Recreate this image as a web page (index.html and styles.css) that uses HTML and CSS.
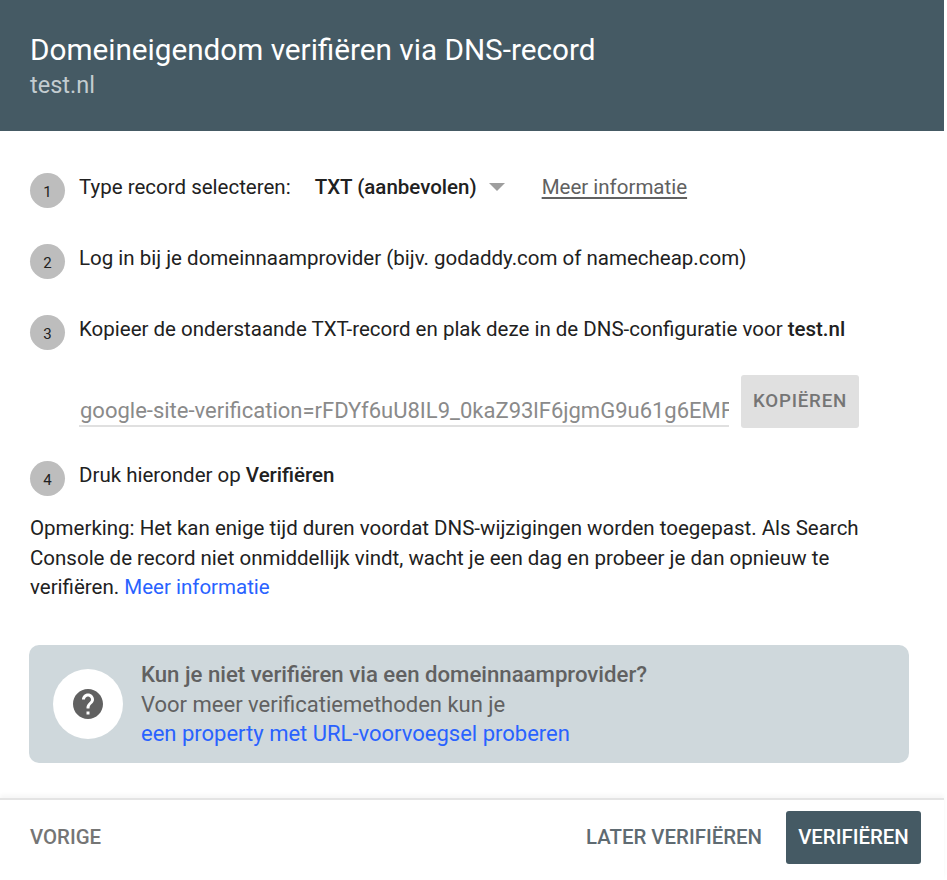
FILE: index.html
```html
<!DOCTYPE html>
<html lang="nl">
<head>
    <meta charset="UTF-8">
    <meta name="viewport" content="width=device-width, initial-scale=1.0">
    <title>Domeineigendom verifiëren via DNS-record</title>
    <link rel="stylesheet" href="styles.css">
</head>
<body>
    <div class="dialog">
        <header class="header">
            <h1>Domeineigendom verifiëren via DNS-record</h1>
            <p>test.nl</p>
        </header>

        <main class="content">
            <div class="step step-first">
                <span class="step-num">1</span>
                <span>Type record selecteren:</span>
                <span class="record-select">TXT (aanbevolen)<span class="arrow"></span></span>
                <a href="#" class="more-grey">Meer informatie</a>
            </div>
            <div class="step step-second">
                <span class="step-num">2</span>
                <span>Log in bij je domeinnaamprovider (bijv. godaddy.com of namecheap.com)</span>
            </div>
            <div class="step step-third">
                <span class="step-num">3</span>
                <span>Kopieer de onderstaande TXT-record en plak deze in de DNS-configuratie voor <b>test.nl</b></span>
            </div>
            <div class="copy-row">
                <div class="record-field">google-site-verification=rFDYf6uU8IL9_0kaZ93lF6jgmG9u61g6EMF</div>
                <button class="copy-button">KOPIËREN</button>
            </div>
            <div class="step step-fourth">
                <span class="step-num">4</span>
                <span>Druk hieronder op <b>Verifiëren</b></span>
            </div>
            <p class="note">Opmerking: Het kan enige tijd duren voordat DNS-wijzigingen worden toegepast. Als Search Console de record niet onmiddellijk vindt, wacht je een dag en probeer je dan opnieuw te verifiëren. <a href="#">Meer informatie</a></p>

            <div class="help-box">
                <div class="help-icon">
                    <svg width="36" height="36" viewBox="0 0 24 24"><path fill="#616161" d="M12 2C6.48 2 2 6.48 2 12s4.48 10 10 10 10-4.48 10-10S17.52 2 12 2zm1 17h-2v-2h2v2zm2.07-7.75l-.9.92C13.45 12.9 13 13.5 13 15h-2v-.5c0-1.1.45-2.1 1.17-2.83l1.24-1.26c.37-.36.59-.86.59-1.41 0-1.1-.9-2-2-2s-2 .9-2 2H8c0-2.21 1.79-4 4-4s4 1.79 4 4c0 .88-.36 1.68-.93 2.25z"/></svg>
                </div>
                <div class="help-text">
                    <b>Kun je niet verifiëren via een domeinnaamprovider?</b><br>
                    Voor meer verificatiemethoden kun je<br>
                    <a href="#">een property met URL-voorvoegsel proberen</a>
                </div>
            </div>
        </main>

        <footer class="footer">
            <button class="text-button back">VORIGE</button>
            <button class="text-button later">LATER VERIFIËREN</button>
            <button class="verify-button">VERIFIËREN</button>
        </footer>
    </div>
</body>
</html>
```
FILE: styles.css
```css
* {
    box-sizing: border-box;
}
body {
    margin: 0;
    background-color: white;
    font-family: Roboto, Arial, sans-serif;
    font-size: 20.5px;
    color: #212121;
}
a {
    text-decoration: none;
    color: #2962ff;
}
b {
    font-weight: 500;
}
button {
    font-family: inherit;
    border: none;
    cursor: pointer;
}
.dialog {
    width: 944px;
    height: 880px;
    display: flex;
    flex-direction: column;
}
.header {
    height: 131px;
    padding: 32px 30px 0;
    background-color: #455a64;
    color: white;
}
.header h1 {
    margin: 0;
    font-size: 29.7px;
    font-weight: 400;
    line-height: 36px;
}
.header p {
    margin: 0;
    font-size: 23.5px;
    line-height: 34px;
    color: #c3ccd0;
}
.content {
    flex: 1;
    padding: 42px 35px 0 29px;
}
.step {
    display: flex;
    align-items: center;
    height: 35px;
}
.step-second {
    margin-top: 36px;
}
.step-third {
    margin-top: 36px;
}
.step-fourth {
    margin-top: 33px;
}
.step-num {
    flex: none;
    width: 35px;
    height: 35px;
    margin: 0 14px 0 1px;
    padding-top: 3px;
    border-radius: 50%;
    background-color: #bdbdbd;
    font-size: 15px;
    line-height: 32px;
    text-align: center;
}
.step > span:not(.step-num) {
    position: relative;
    top: -4px;
}
.record-select {
    display: inline-flex;
    align-items: center;
    margin-left: 24px;
    font-weight: 500;
}
.arrow {
    width: 0;
    height: 0;
    margin-left: 12px;
    border-left: 8.5px solid transparent;
    border-right: 8.5px solid transparent;
    border-top: 8px solid #9e9e9e;
}
.more-grey {
    position: relative;
    top: -4px;
    margin-left: 37px;
    color: #616161;
    text-decoration: underline;
    text-underline-offset: 3px;
}
.copy-row {
    display: flex;
    align-items: flex-end;
    gap: 12px;
    margin: 25px 0 0 50px;
}
.record-field {
    width: 650px;
    height: 36px;
    margin-bottom: 1px;
    padding: 6px 0 0 1px;
    overflow: hidden;
    white-space: nowrap;
    border-bottom: 2px solid #e0e0e0;
    font-size: 22px;
    line-height: 28px;
    color: #8a8a8a;
}
.copy-button {
    width: 118px;
    height: 53px;
    padding-bottom: 3px;
    border-radius: 3px;
    background-color: #e0e0e0;
    font-size: 18.7px;
    font-weight: 500;
    letter-spacing: 0.8px;
    color: #757575;
}
.note {
    margin: 18px 0 0 1px;
    line-height: 29.5px;
}
.help-box {
    display: flex;
    align-items: center;
    gap: 18px;
    width: 880px;
    height: 118px;
    margin-top: 42px;
    padding-left: 24px;
    border-radius: 10px;
    background-color: #cfd8dc;
}
.help-icon {
    flex: none;
    display: flex;
    align-items: center;
    justify-content: center;
    width: 70px;
    height: 70px;
    border-radius: 50%;
    background-color: white;
}
.help-text {
    padding-top: 2px;
    font-size: 22px;
    line-height: 29.5px;
    color: #616161;
}
.help-text b {
    font-size: 22.2px;
}
.footer {
    display: flex;
    align-items: center;
    height: 82px;
    padding: 0 23px 6px 30px;
    border-top: 2px solid #e4e4e4;
    box-shadow: 0 -3px 4px rgba(0,0,0,0.04);
}
.text-button {
    padding: 0;
    background: none;
    font-size: 20.4px;
    font-weight: 500;
    color: #5f6b72;
}
.back {
    margin-right: auto;
    color: #757575;
}
.verify-button {
    width: 135px;
    height: 53px;
    margin-left: 24px;
    border-radius: 3px;
    background-color: #455a64;
    font-size: 20.4px;
    font-weight: 500;
    color: white;
}
```
